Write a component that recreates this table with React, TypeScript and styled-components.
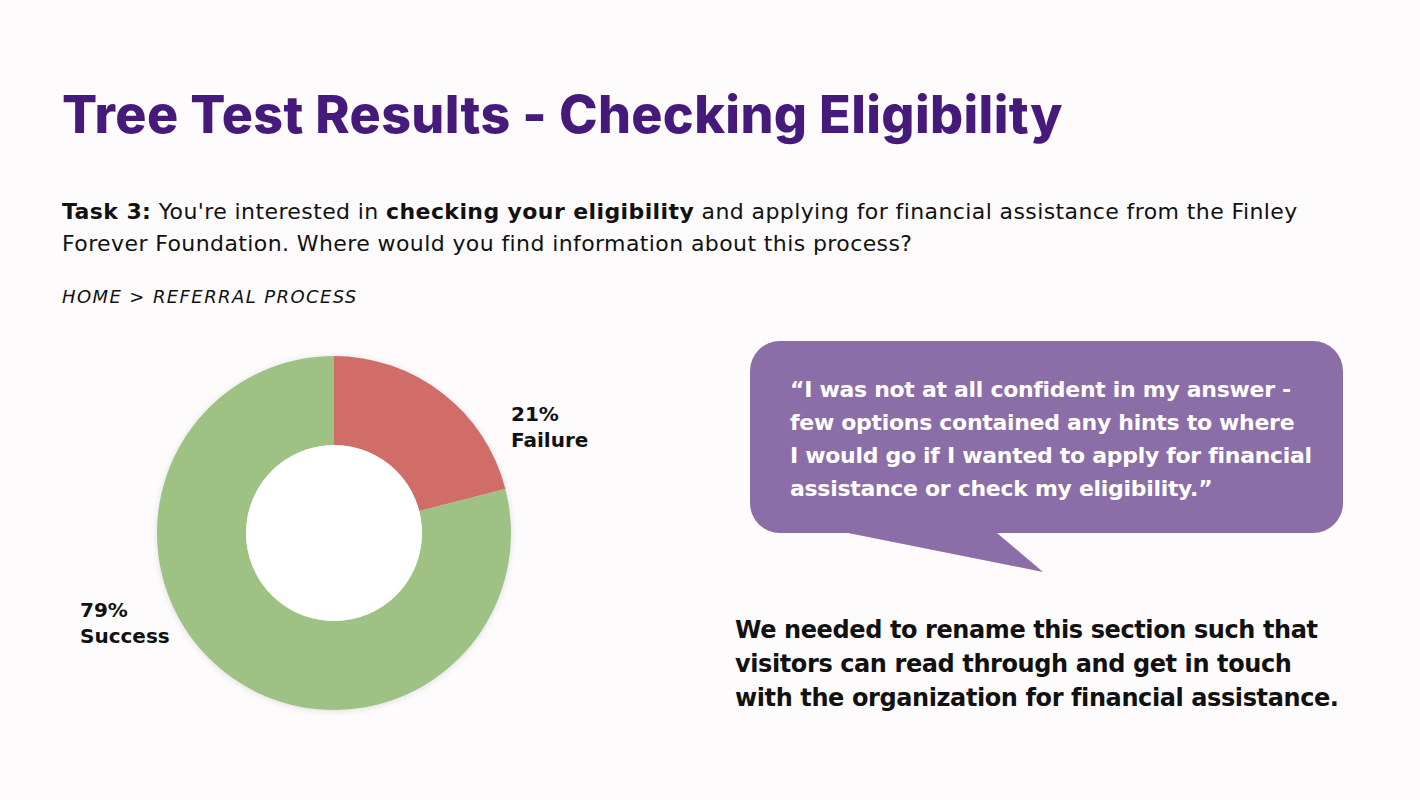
import styled, { createGlobalStyle } from 'styled-components'

const GlobalStyle = createGlobalStyle`
  html, body {
    margin: 0;
    background: #fdfbfc;
  }
  body {
    font-family: "DejaVu Sans", "Open Sans", sans-serif;
    color: #111;
  }
`

const Page = styled.main`
  width: 1420px;
  height: 800px;
  box-sizing: border-box;
  padding: 84px 0 0 62px;
  overflow: hidden;
`

const Title = styled.h1`
  margin: 0;
  font-family: Inter, "Open Sans", sans-serif;
  font-size: 52px;
  line-height: 62px;
  font-weight: 800;
  letter-spacing: 0.35px;
  color: #461a7b;
`

const Task = styled.p`
  margin: 50px 0 0;
  width: 1290px;
  font-size: 22px;
  line-height: 32px;
  letter-spacing: 0.4px;
  b {
    font-weight: 700;
  }
`

const Crumb = styled.p`
  margin: 26px 0 0;
  font-size: 18px;
  font-style: italic;
  letter-spacing: 1.4px;
  text-transform: uppercase;
`

const Content = styled.section`
  display: grid;
  grid-template-columns: 673px 1fr;
  margin-top: 34px;
`

const ChartRow = styled.div`
  display: flex;
  align-items: flex-start;
  padding-left: 18px;
  padding-top: 15px;
`

const Label = styled.div<{ $top: number; $width?: number }>`
  flex: none;
  width: ${(p) => (p.$width ? `${p.$width}px` : 'auto')};
  margin-top: ${(p) => p.$top}px;
  font-size: 20px;
  line-height: 26px;
  font-weight: 700;
  white-space: nowrap;
  position: relative;
  z-index: 1;
`

const Donut = styled.svg`
  flex: none;
  filter: drop-shadow(0 1px 3px rgba(0, 0, 0, 0.12));
`

const Side = styled.div`
  display: flex;
  flex-direction: column;
`

const Bubble = styled.blockquote`
  position: relative;
  margin: 0 0 0 15px;
  width: 593px;
  height: 192px;
  box-sizing: border-box;
  padding: 32px 0 0 40px;
  border-radius: 30px;
  background: #8b6ea8;
  color: #fff;
  font-size: 22px;
  line-height: 33px;
  font-weight: 700;
  letter-spacing: -0.3px;
  white-space: nowrap;
  &::after {
    content: '';
    position: absolute;
    top: 100%;
    left: 98px;
    width: 195px;
    height: 39px;
    background: #8b6ea8;
    clip-path: polygon(0 0, 76.4% 0, 100% 100%);
  }
`

const Note = styled.p`
  margin: 80px 0 0;
  font-size: 24px;
  line-height: 34px;
  font-weight: 700;
  letter-spacing: -0.4px;
  white-space: nowrap;
`

const data = [
  { value: 21, color: '#d16d68' },
  { value: 79, color: '#9dc284' },
]

const R = 177
const r = 88

const point = (rad: number, deg: number) => {
  const a = ((deg - 90) * Math.PI) / 180
  return `${R + rad * Math.cos(a)} ${R + rad * Math.sin(a)}`
}

const slice = (from: number, to: number) => {
  const big = to - from > 180 ? 1 : 0
  return [
    `M ${point(R, from)}`,
    `A ${R} ${R} 0 ${big} 1 ${point(R, to)}`,
    `L ${point(r, to)}`,
    `A ${r} ${r} 0 ${big} 0 ${point(r, from)}`,
    'Z',
  ].join(' ')
}

const DonutChart = () => {
  let start = 0
  return (
    <Donut width={R * 2} height={R * 2} viewBox={`0 0 ${R * 2} ${R * 2}`}>
      {data.map((d) => {
        const end = start + (d.value / 100) * 360
        const path = <path key={d.color} d={slice(start, end)} fill={d.color} />
        start = end
        return path
      })}
      <circle cx={R} cy={R} r={r} fill="#fff" />
    </Donut>
  )
}

export default function App() {
  return (
    <>
      <GlobalStyle />
      <Page>
        <Title>Tree Test Results - Checking Eligibility</Title>
        <Task>
          <b>Task 3:</b> You're interested in <b>checking your eligibility</b> and applying for
          financial assistance from the Finley Forever Foundation. Where would you find information
          about this process?
        </Task>
        <Crumb>Home &gt; Referral Process</Crumb>
        <Content>
          <ChartRow>
            <Label $top={241} $width={77}>
              79%
              <br />
              Success
            </Label>
            <DonutChart />
            <Label $top={45}>
              21%
              <br />
              Failure
            </Label>
          </ChartRow>
          <Side>
            <Bubble>
              “I was not at all confident in my answer -
              <br />
              few options contained any hints to where
              <br />
              I would go if I wanted to apply for financial
              <br />
              assistance or check my eligibility.”
            </Bubble>
            <Note>
              We needed to rename this section such that
              <br />
              visitors can read through and get in touch
              <br />
              with the organization for financial assistance.
            </Note>
          </Side>
        </Content>
      </Page>
    </>
  )
}
